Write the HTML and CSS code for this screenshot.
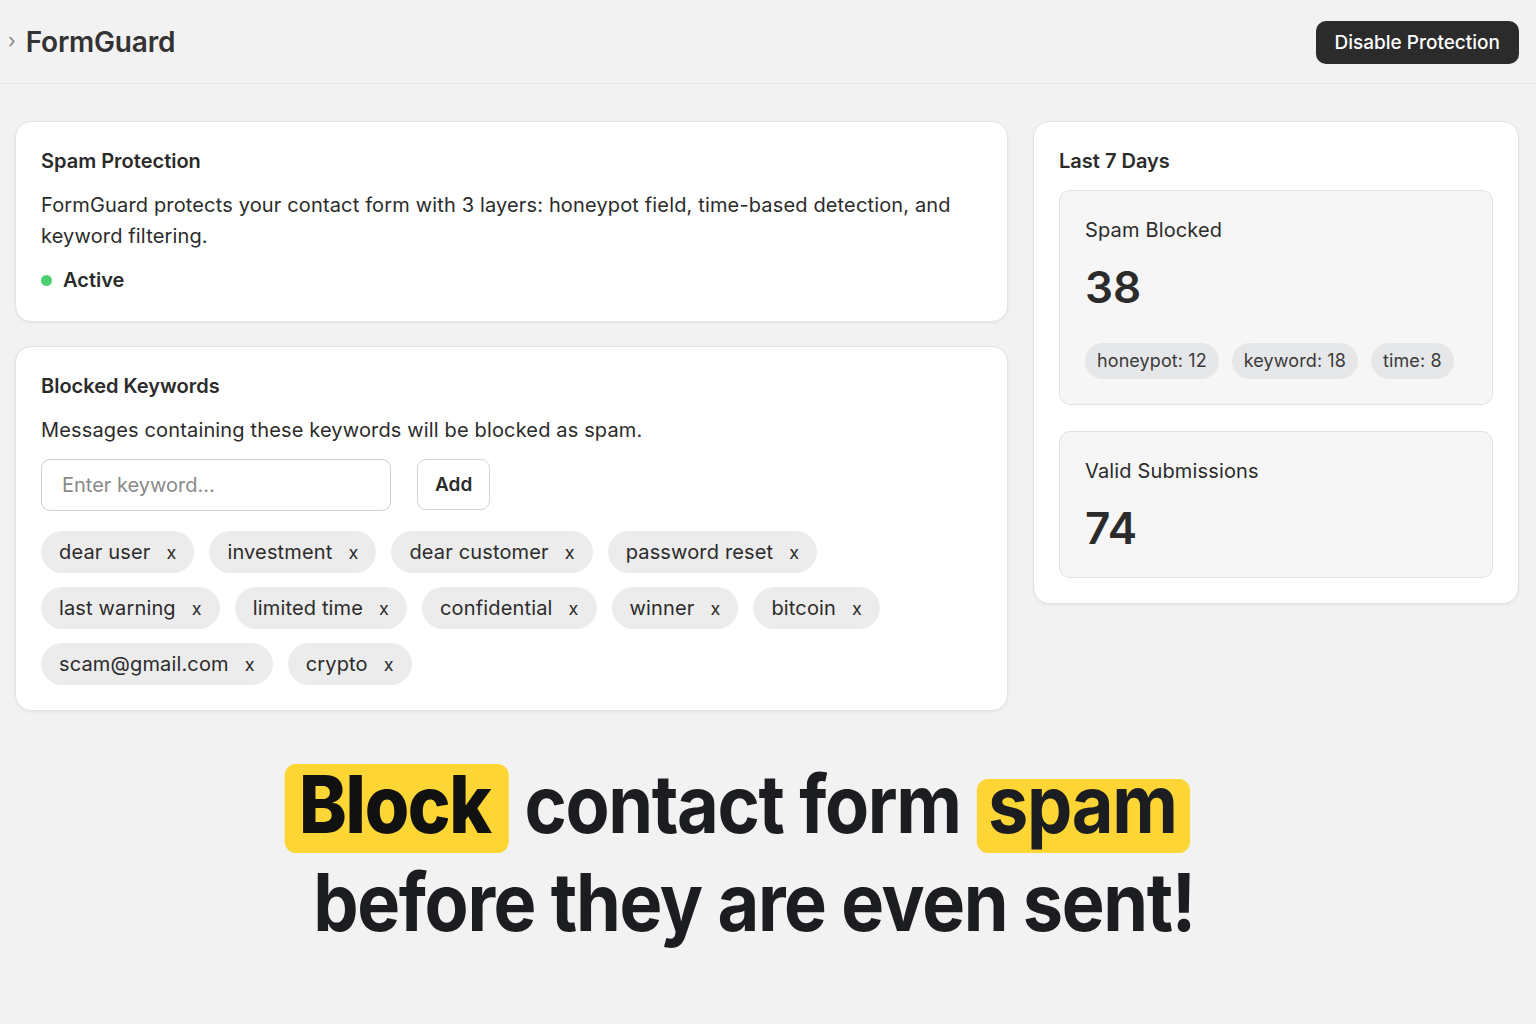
FILE: index.html
```html
<!doctype html>
<html lang="en">
 <head>
  <meta charset="UTF-8">
  <meta name="viewport" content="width=device-width, initial-scale=1.0">
  <title>FormGuard</title>
  <link rel="stylesheet" href="styles.css">
 </head>
 <body>
  <header class="topbar">
   <div class="brand">
    <span class="chevron">›</span>
    <h1>FormGuard</h1>
   </div>
   <button class="btn-dark">Disable Protection</button>
  </header>

  <main class="layout">
   <div class="col-main">
    <section class="card">
     <h2>Spam Protection</h2>
     <p class="desc">FormGuard protects your contact form with 3 layers: honeypot field, time-based detection, and keyword filtering.</p>
     <div class="status"><span class="dot"></span>Active</div>
    </section>

    <section class="card keywords">
     <h2>Blocked Keywords</h2>
     <p class="desc">Messages containing these keywords will be blocked as spam.</p>
     <div class="add-row">
      <input type="text" class="keyword-input" placeholder="Enter keyword...">
      <button class="btn-light">Add</button>
     </div>
     <div class="tags">
      <span class="tag">dear user<span class="x">x</span></span>
      <span class="tag">investment<span class="x">x</span></span>
      <span class="tag">dear customer<span class="x">x</span></span>
      <span class="tag">password reset<span class="x">x</span></span>
      <span class="tag">last warning<span class="x">x</span></span>
      <span class="tag">limited time<span class="x">x</span></span>
      <span class="tag">confidential<span class="x">x</span></span>
      <span class="tag">winner<span class="x">x</span></span>
      <span class="tag">bitcoin<span class="x">x</span></span>
      <span class="tag">scam@gmail.com<span class="x">x</span></span>
      <span class="tag">crypto<span class="x">x</span></span>
     </div>
    </section>
   </div>

   <aside class="card stats">
    <h2>Last 7 Days</h2>
    <div class="stat-box">
     <div class="stat-label">Spam Blocked</div>
     <div class="stat-value">38</div>
     <div class="pills">
      <span class="pill">honeypot: 12</span>
      <span class="pill">keyword: 18</span>
      <span class="pill">time: 8</span>
     </div>
    </div>
    <div class="stat-box">
     <div class="stat-label">Valid Submissions</div>
     <div class="stat-value">74</div>
    </div>
   </aside>
  </main>

  <div class="headline">
   <p class="line1"><span class="mark mark-tall">Block</span> contact form <span class="mark">spam</span></p>
   <p class="line2">before they are even sent!</p>
  </div>
 </body>
</html>
```
FILE: styles.css
```css
body {
  margin: 0;
  background: #f2f2f2;
  font-family: Inter, "Noto Sans", sans-serif;
  color: #2b2b2b;
}
h1, h2, p {
  margin: 0;
}

/* top bar */
.topbar {
  height: 84px;
  box-sizing: border-box;
  border-bottom: 1px solid #e6e6e6;
  display: flex;
  align-items: center;
  justify-content: space-between;
  padding: 0 17px 0 8px;
}
.brand {
  display: flex;
  align-items: center;
  gap: 10px;
}
.chevron {
  color: #888;
  font-size: 20px;
  line-height: 1;
  margin-top: -2px;
}
.brand h1 {
  font-size: 28px;
  font-weight: 600;
  color: #333;
  letter-spacing: -0.2px;
}
.btn-dark {
  background: #2b2b2b;
  color: #fff;
  border: none;
  border-radius: 10px;
  height: 43px;
  padding: 0 19px;
  font-family: inherit;
  font-size: 19px;
  font-weight: 500;
  margin-top: 1px;
}

/* main grid */
.layout {
  display: grid;
  grid-template-columns: 993px 486px;
  column-gap: 25px;
  align-items: start;
  padding: 37px 17px 0 15px;
}
.col-main {
  display: flex;
  flex-direction: column;
  gap: 24px;
}
.card {
  background: #fff;
  border: 1px solid #e3e3e3;
  border-radius: 16px;
  box-shadow: 0 1px 3px rgba(0, 0, 0, 0.06);
  padding: 27px 25px 29px;
}
.card.keywords {
  padding-bottom: 25px;
}
.card h2 {
  font-size: 20px;
  font-weight: 600;
  color: #2b2b2b;
  line-height: 24px;
}
.desc {
  font-size: 20px;
  letter-spacing: 0.15px;
  line-height: 31px;
  margin-top: 17px;
  color: #2b2b2b;
}
.status {
  display: flex;
  align-items: center;
  gap: 11px;
  font-size: 20px;
  font-weight: 600;
  margin-top: 16px;
  line-height: 24px;
}
.dot {
  width: 11px;
  height: 11px;
  border-radius: 50%;
  background: #4ccf6e;
}

/* keywords */
.add-row {
  display: flex;
  gap: 26px;
  margin-top: 13px;
}
.keyword-input {
  width: 350px;
  height: 52px;
  box-sizing: border-box;
  border: 1px solid #cfcfcf;
  border-radius: 9px;
  padding: 0 20px;
  font-family: inherit;
  font-size: 20px;
  color: #2b2b2b;
  outline: none;
}
.keyword-input::placeholder {
  color: #8a8a8a;
}
.btn-light {
  height: 51px;
  padding: 0 17px;
  background: #fff;
  border: 1px solid #d3d3d3;
  border-radius: 9px;
  font-family: inherit;
  font-size: 19px;
  font-weight: 600;
  color: #2b2b2b;
}
.tags {
  display: flex;
  flex-wrap: wrap;
  gap: 14px 15px;
  margin-top: 20px;
  max-width: 860px;
}
.tag {
  display: inline-flex;
  align-items: center;
  height: 42px;
  padding: 0 18px;
  background: #ececec;
  border-radius: 21px;
  font-size: 20px;
  letter-spacing: 0.15px;
  color: #2b2b2b;
}
.x {
  margin-left: 16px;
  font-size: 18px;
}

/* stats */
.stats {
  padding-bottom: 25px;
}
.stat-box {
  background: #f6f6f6;
  border: 1px solid #e2e2e2;
  border-radius: 11px;
  padding: 26px 25px 25px;
  margin-top: 17px;
}
.stat-box + .stat-box {
  margin-top: 26px;
  padding-bottom: 22px;
}
.stat-label {
  font-size: 20px;
  line-height: 26px;
  letter-spacing: 0.15px;
  color: #2b2b2b;
}
.stat-value {
  font-size: 44px;
  font-weight: 600;
  line-height: 54px;
  margin-top: 17px;
  color: #2b2b2b;
}
.pills {
  display: flex;
  gap: 13px;
  margin-top: 29px;
}
.pill {
  display: inline-block;
  background: #e6e7e9;
  border-radius: 18px;
  height: 36px;
  line-height: 36px;
  padding: 0 12px;
  font-size: 18px;
  letter-spacing: 0.1px;
  color: #3a3a3a;
}

/* headline: condensed display type */
.headline {
  text-align: center;
  margin-top: 44px;
  color: #1b1d20;
  font-weight: 700;
  font-size: 80px;
  letter-spacing: -1.5px;
  line-height: 97px;
  transform: scaleX(0.9);
  transform-origin: 768px 0;
}
.line1 {
  padding-right: 68px;
}
.line2 {
  padding-right: 31px;
}
.mark {
  display: inline-block;
  line-height: 50px;
  background: #fdd534;
  border-radius: 12px;
  padding: 0 15px 24px 13px;
}
.mark-tall {
  font-weight: 800;
  color: #111;
  padding: 15px 20px 24px 16px;
}
```
